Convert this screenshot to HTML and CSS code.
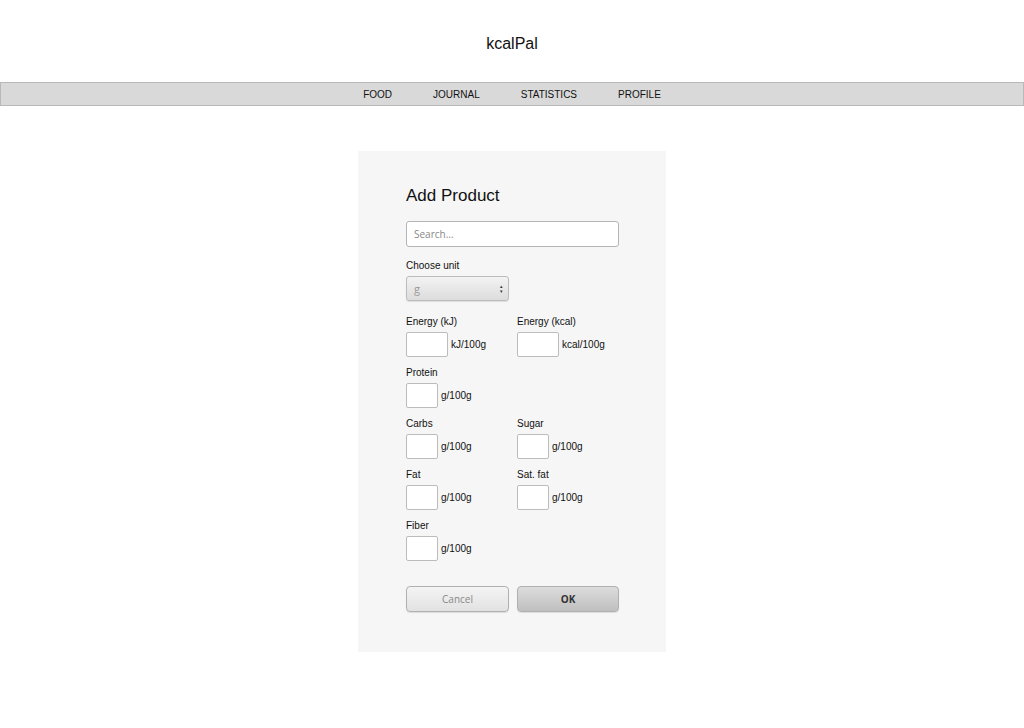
FILE: index.html
```html
<!DOCTYPE html>
<html lang="en">
<head>
    <meta charset="UTF-8">
    <meta name="viewport" content="width=device-width, initial-scale=1.0">
    <title>kcalPal</title>
    <link rel="stylesheet" href="styles.css">
</head>
<body>

    <header class="header">
        <div class="logo">kcalPal</div>
    </header>

    <nav class="nav">
        <a href="#">FOOD</a>
        <a href="#">JOURNAL</a>
        <a href="#">STATISTICS</a>
        <a href="#">PROFILE</a>
    </nav>

    <div class="panel">
        <h1 class="panel-title">Add Product</h1>

        <input type="text" class="search" placeholder="Search...">

        <label class="label unit-label" for="unit">Choose unit</label>
        <div class="select">
            <span>g</span>
            <span class="arrows">&#9652;<br>&#9662;</span>
        </div>

        <div class="fields">
            <div class="field">
                <div class="label">Energy (kJ)</div>
                <div class="value"><input type="text" class="num wide"><span>kJ/100g</span></div>
            </div>
            <div class="field">
                <div class="label">Energy (kcal)</div>
                <div class="value"><input type="text" class="num wide"><span>kcal/100g</span></div>
            </div>

            <div class="field">
                <div class="label">Protein</div>
                <div class="value"><input type="text" class="num"><span>g/100g</span></div>
            </div>
            <div class="field"></div>

            <div class="field">
                <div class="label">Carbs</div>
                <div class="value"><input type="text" class="num"><span>g/100g</span></div>
            </div>
            <div class="field">
                <div class="label">Sugar</div>
                <div class="value"><input type="text" class="num"><span>g/100g</span></div>
            </div>

            <div class="field">
                <div class="label">Fat</div>
                <div class="value"><input type="text" class="num"><span>g/100g</span></div>
            </div>
            <div class="field">
                <div class="label">Sat. fat</div>
                <div class="value"><input type="text" class="num"><span>g/100g</span></div>
            </div>

            <div class="field">
                <div class="label">Fiber</div>
                <div class="value"><input type="text" class="num"><span>g/100g</span></div>
            </div>
        </div>

        <div class="buttons">
            <button class="btn cancel">Cancel</button>
            <button class="btn ok">OK</button>
        </div>
    </div>

</body>
</html>
```

FILE: styles.css
```css
body {
    margin: 0;
    background-color: #fff;
    font-family: "Liberation Sans", Arial, sans-serif;
    color: #111;
}
.header {
    height: 82px;
    box-sizing: border-box;
    padding-top: 34px;
    text-align: center;
}
.logo {
    font-size: 16px;
    line-height: 20px;
}
.nav {
    display: flex;
    justify-content: center;
    height: 24px;
    box-sizing: border-box;
    background-color: #d9d9d9;
    border: 1px solid #b9b9b9;
    padding-top: 1px;
}
.nav a {
    font-size: 10px;
    line-height: 21px;
    color: #111;
    text-decoration: none;
    padding: 0 20.5px;
}

.panel {
    width: 308px;
    margin: 45px auto 0;
    box-sizing: border-box;
    padding: 33px 47px 40px 48px;
    background-color: #f6f6f6;
}
.panel-title {
    margin: 0 0 13px;
    font-size: 17px;
    font-weight: normal;
    line-height: 24px;
}
.search {
    display: block;
    width: 213px;
    height: 26px;
    box-sizing: border-box;
    border: 1px solid #b5b5b5;
    border-radius: 3px;
    background: #fff;
    padding: 0 7px;
    font-family: "Open Sans", sans-serif;
    font-size: 10px;
}
.search::placeholder { color: #888; }

.label {
    display: block;
    font-size: 10px;
    line-height: 14px;
    margin-bottom: 3px;
}
.unit-label { margin-top: 12px; }

.select {
    display: flex;
    justify-content: space-between;
    align-items: center;
    width: 103px;
    height: 25px;
    box-sizing: border-box;
    padding: 0 5px 0 7px;
    border: 1px solid #bcbcbc;
    border-radius: 3px;
    background: linear-gradient(#f3f3f3, #dcdcdc);
    color: #999;
    font-family: "Open Sans", sans-serif;
    font-size: 11px;
    box-shadow: 0 1px 1px rgba(0, 0, 0, 0.1);
}
.arrows {
    font-size: 5px;
    line-height: 5px;
    color: #333;
    text-align: center;
}

.fields {
    display: grid;
    grid-template-columns: 111px 102px;
    margin-top: 14px;
    row-gap: 9px;
}
.value {
    display: flex;
    align-items: center;
    height: 25px;
}
.value span {
    font-size: 10px;
    margin-left: 3px;
}
.num {
    width: 32px;
    height: 25px;
    box-sizing: border-box;
    border: 1px solid #bcbcbc;
    border-radius: 2px;
    background: #fff;
    margin: 0;
}
.num.wide { width: 42px; }

.buttons {
    display: flex;
    gap: 8px;
    margin-top: 25px;
}
.btn {
    height: 26px;
    width: 103px;
    border: 1px solid #b0b0b0;
    border-radius: 4px;
    font-family: "Open Sans", sans-serif;
    font-size: 10px;
    cursor: pointer;
    box-shadow: 0 1px 1px rgba(0, 0, 0, 0.1);
}
.cancel {
    background: linear-gradient(#f4f4f4, #e2e2e2);
    color: #888;
}
.ok {
    width: 102px;
    background: linear-gradient(#dcdcdc, #bfbfbf);
    color: #333;
    font-weight: bold;
}
```
